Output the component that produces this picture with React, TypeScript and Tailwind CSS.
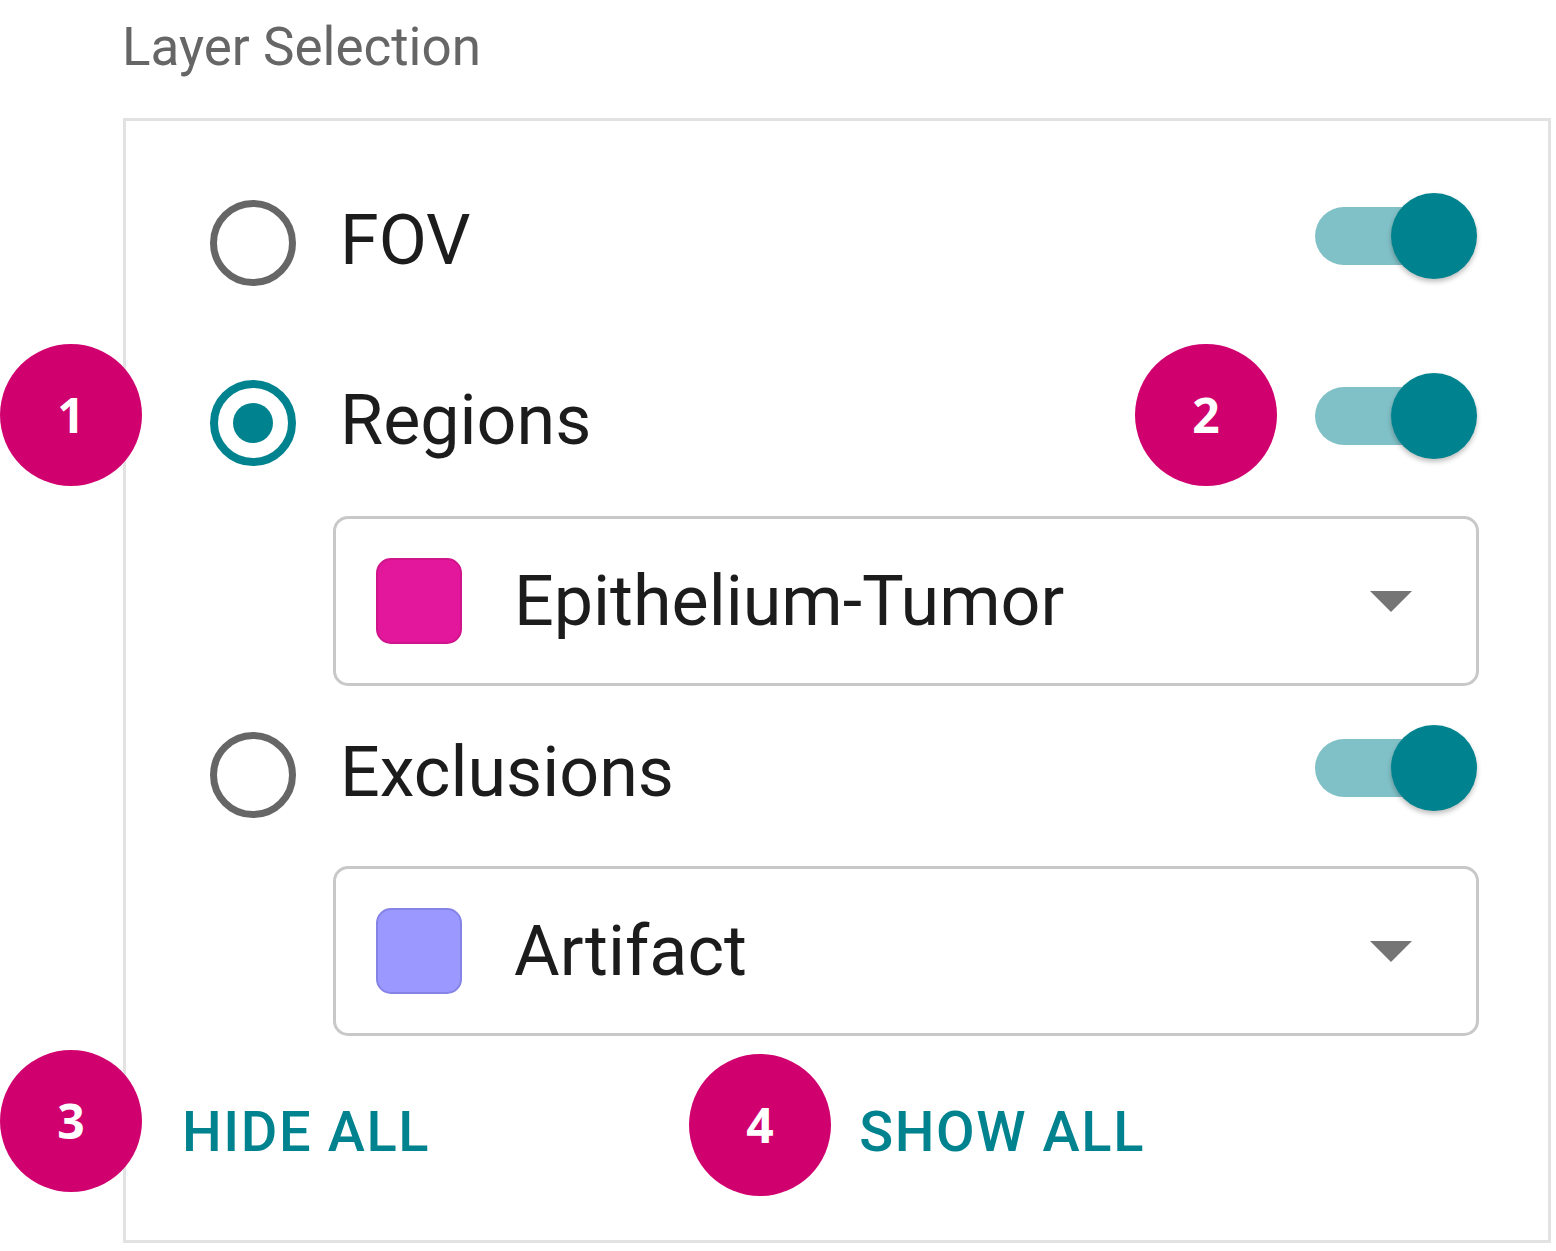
import React from 'react'

type Layer = {
    label: string
    selected: boolean
    option?: { name: string; color: string; border: string }
}

const layers: Layer[] = [
    { label: 'FOV', selected: false },
    { label: 'Regions', selected: true, option: { name: 'Epithelium-Tumor', color: 'bg-[#e3179b]', border: 'border-[#d0148c]' } },
    { label: 'Exclusions', selected: false, option: { name: 'Artifact', color: 'bg-[#9b99ff]', border: 'border-[#8583e6]' } },
]

function Radio({ checked }: { checked: boolean }) {
    if (checked) {
        return (
            <div className="w-[86px] h-[86px] rounded-full border-[8px] border-[#00838f] flex items-center justify-center shrink-0">
                <div className="w-[40px] h-[40px] rounded-full bg-[#00838f]" />
            </div>
        )
    }
    return <div className="w-[86px] h-[86px] rounded-full border-[7px] border-[#666666] shrink-0" />
}

function Toggle() {
    return (
        <div className="relative w-[162px] h-[86px] shrink-0 -translate-y-[4px]">
            <div className="absolute left-0 top-[14px] w-[134px] h-[58px] rounded-full bg-[#80c1c7]" />
            <div className="absolute right-0 top-0 w-[86px] h-[86px] rounded-full bg-[#00838f] shadow-[0_3px_5px_rgba(0,0,0,0.25)]" />
        </div>
    )
}

function SelectBox({ name, color, border }: { name: string; color: string; border: string }) {
    return (
        <div className="ml-[207px] w-[1146px] h-[170px] rounded-[15px] border-[3px] border-[#c8c8c8] flex items-center pl-[40px] pr-[64px]">
            <div className={`w-[86px] h-[86px] rounded-[15px] border-2 ${border} ${color} shrink-0`} />
            <span className="ml-[52px] text-[70px] text-[#1c1c1c] leading-none flex-1">{name}</span>
            <svg width="42" height="21" viewBox="0 0 42 21">
                <path d="M0 0 L42 0 L21 21 Z" fill="#757575" />
            </svg>
        </div>
    )
}

function Badge({ n, className }: { n: number; className: string }) {
    return (
        <div className={`absolute w-[142px] h-[142px] rounded-full bg-[#d0006f] flex items-center justify-center text-white text-[48px] font-bold font-['Open_Sans',sans-serif] ${className}`}>
            {n}
        </div>
    )
}

export default function App() {
    return (
        <div className="relative w-[1556px] h-[1251px] bg-white font-['Roboto',sans-serif] overflow-hidden">
            <div className="pt-[21px] pl-[122px] text-[53px] leading-none text-[#666666]">Layer Selection</div>

            <div className="ml-[123px] mt-[44px] w-[1428px] h-[1125px] border-[3px] border-[#e2e2e2] pt-[69px]">
                {layers.map((layer, idx) => (
                    <div key={layer.label} className={idx === 0 ? '' : idx === 1 ? 'mt-[80px]' : 'mt-[36px]'}>
                        <div className="h-[100px] flex items-center pl-[84px] pr-[71px]">
                            <div className="translate-y-[3px]">
                                <Radio checked={layer.selected} />
                            </div>
                            <span className="ml-[44px] text-[70px] leading-none text-[#1c1c1c] flex-1">{layer.label}</span>
                            <Toggle />
                        </div>
                        {layer.option && (
                            <div className={idx === 1 ? 'mt-[46px]' : 'mt-[44px]'}>
                                <SelectBox {...layer.option} />
                            </div>
                        )}
                    </div>
                ))}

                <div className="mt-[46px] h-[100px] flex items-center pl-[56px]">
                    <button className="text-[56px] font-medium tracking-[0.02857em] text-[#00838f] leading-none uppercase">Hide all</button>
                    <button className="ml-[429px] text-[56px] font-medium tracking-[0.02857em] text-[#00838f] leading-none uppercase">Show all</button>
                </div>
            </div>

            <Badge n={1} className="left-0 top-[344px]" />
            <Badge n={2} className="left-[1135px] top-[344px]" />
            <Badge n={3} className="left-0 top-[1050px]" />
            <Badge n={4} className="left-[689px] top-[1054px]" />
        </div>
    )
}
